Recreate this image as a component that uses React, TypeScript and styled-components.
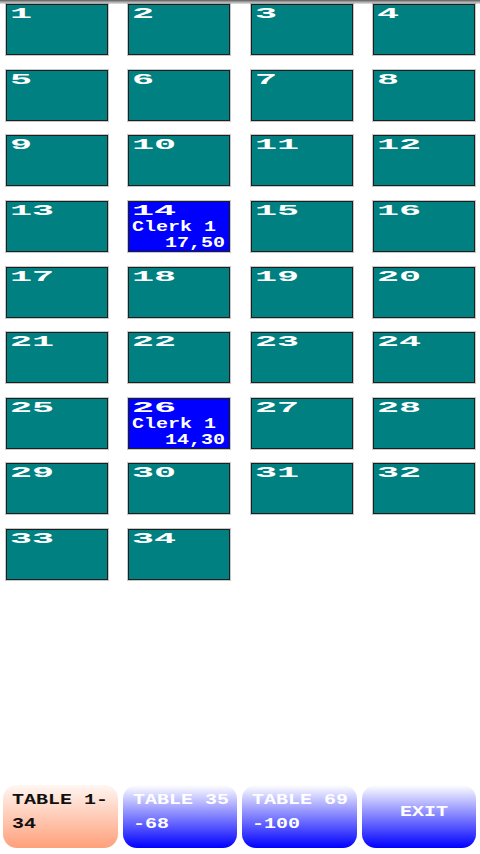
import React from "react";
import styled, { createGlobalStyle } from "styled-components";

const Global = createGlobalStyle`
  html, body { margin: 0; padding: 0; background: #ffffff; }
  body { font-family: "Liberation Mono", "DejaVu Sans Mono", monospace; }
  * { box-sizing: border-box; }
`;

const Screen = styled.div`
  width: 480px;
  height: 854px;
  display: flex;
  flex-direction: column;
  background: #ffffff;
  overflow: hidden;
`;

const TopShade = styled.div`
  height: 4px;
  flex: none;
  background: linear-gradient(#5a5a5a, #9a9a9a 40%, #e6e6e6);
`;

const TileGrid = styled.div`
  display: grid;
  grid-template-columns: repeat(4, 102px);
  grid-auto-rows: 51px;
  column-gap: 20.33px;
  row-gap: 14.63px;
  padding: 0 0 0 6px;
`;

const Tile = styled.div<{ $busy?: boolean }>`
  background: ${(p) => (p.$busy ? "#0000ff" : "#008080")};
  border: 1px solid #1e1e1e;
  box-shadow: 0 0 0 1px rgba(0, 0, 0, 0.22);
  display: flex;
  flex-direction: column;
  padding: 2px 4px 0 3px;
  color: #ffffff;
  font-family: "Liberation Mono", "DejaVu Sans Mono", monospace;
  font-weight: bold;
  font-size: 15px;
  line-height: 16px;
  overflow: hidden;
`;

const Line = styled.div<{ $right?: boolean }>`
  height: 16px;
  white-space: nowrap;
  text-align: ${(p) => (p.$right ? "right" : "left")};
`;

const Stretch = styled.span<{ $sx: number; $origin?: string }>`
  display: inline-block;
  transform: scaleX(${(p) => p.$sx});
  transform-origin: ${(p) => p.$origin ?? "left"} center;
`;

const BottomBar = styled.div`
  margin-top: auto;
  display: grid;
  grid-template-columns: repeat(4, 1fr);
  column-gap: 5px;
  padding: 0 4px 6px 3px;
`;

const NavButton = styled.div<{ $active?: boolean; $center?: boolean }>`
  height: 63px;
  border-radius: 14px;
  background: ${(p) =>
    p.$active
      ? "linear-gradient(#fff6f2, #ffa07a)"
      : "linear-gradient(#ffffff, #0000ff)"};
  color: ${(p) => (p.$active ? "#101010" : "#ffffff")};
  display: flex;
  align-items: center;
  justify-content: ${(p) => (p.$center ? "center" : "flex-start")};
  padding: 0 0 8px ${(p) => (p.$active ? "9px" : "10px")};
  font-family: "Liberation Mono", "DejaVu Sans Mono", monospace;
  font-weight: bold;
  font-size: 15px;
  line-height: 24px;
  white-space: nowrap;
`;

type TableInfo = { clerk: string; amount: string };
const busy: Record<number, TableInfo> = {
  14: { clerk: "Clerk 1", amount: "17,50" },
  26: { clerk: "Clerk 1", amount: "14,30" },
};

const tables = Array.from({ length: 34 }, (_, i) => i + 1);

export default function App() {
  return (
    <Screen>
      <Global />
      <TopShade />
      <TileGrid>
        {tables.map((n) => {
          const info = busy[n];
          return (
            <Tile key={n} $busy={!!info}>
              <Line>
                <Stretch $sx={2.45}>{n}</Stretch>
              </Line>
              {info && (
                <>
                  <Line>
                    <Stretch $sx={1.333}>{info.clerk}</Stretch>
                  </Line>
                  <Line $right>
                    <Stretch $sx={1.333} $origin="right">
                      {info.amount}
                    </Stretch>
                  </Line>
                </>
              )}
            </Tile>
          );
        })}
      </TileGrid>
      <BottomBar>
        <NavButton $active>
          <Stretch $sx={1.333}>
            TABLE 1-
            <br />
            34
          </Stretch>
        </NavButton>
        <NavButton>
          <Stretch $sx={1.333}>
            TABLE 35
            <br />
            -68
          </Stretch>
        </NavButton>
        <NavButton>
          <Stretch $sx={1.333}>
            TABLE 69
            <br />
            -100
          </Stretch>
        </NavButton>
        <NavButton $center>
          <Stretch $sx={1.333} $origin="center">
            EXIT
          </Stretch>
        </NavButton>
      </BottomBar>
    </Screen>
  );
}
